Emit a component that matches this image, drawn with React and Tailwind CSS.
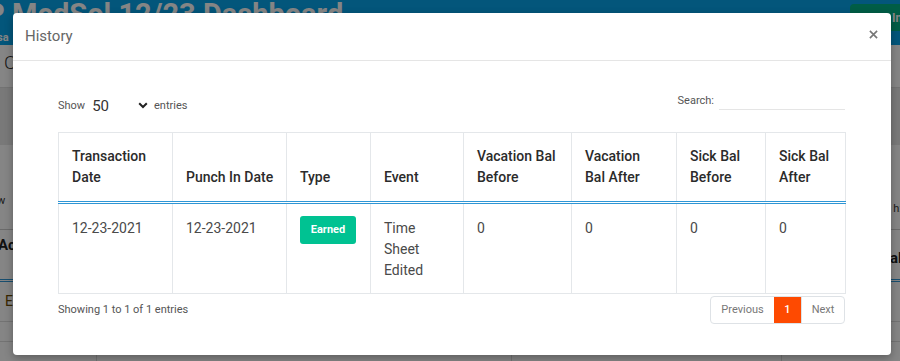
import React from "react";

const cols = [114, 114, 84, 93, 108, 105, 89, 80];
const heads = [
  ["Transaction", "Date"],
  ["Punch In Date"],
  ["Type"],
  ["Event"],
  ["Vacation Bal", "Before"],
  ["Vacation", "Bal After"],
  ["Sick Bal", "Before"],
  ["Sick Bal", "After"],
];

const td = "border border-[#e4e7ea] px-[13px] pt-[14px] pb-[12px] align-top text-[14px] leading-[21px] text-[#4a4a4a]";

export default function App() {
  return (
    <div
      className="relative w-[900px] h-[361px] overflow-hidden bg-white"
      style={{ fontFamily: "Roboto, 'Noto Sans', sans-serif" }}
    >
      {/* background page */}
      <div className="flex flex-col w-[900px]">
        <div className="h-[45px] bg-[#06a5ec] flex items-start overflow-hidden">
          <div className="flex-1 flex flex-col">
            <div className="ml-[-14px] mt-[-3px] text-[29px] leading-[34px] font-bold text-white whitespace-nowrap">
              P MedSol 12/23 Dashboard
            </div>
            <div className="ml-[-3px] mt-[1px] text-[11px] font-bold text-white leading-[12px]">sa</div>
          </div>
          <div className="mt-[4px] mr-[-40px] w-[90px] h-[27px] rounded-[4px] bg-[#00b386] text-white text-[12px] font-bold flex items-center pl-[42px] whitespace-nowrap">
            In
          </div>
        </div>
        <div className="h-[43px] bg-white border-b border-[#dddddd] flex items-center text-[19px] font-light text-[#333]">
          <span className="ml-[4px] mt-[-6px]">C</span>
        </div>
        <div className="h-[57px] bg-[#e8e8e8]" />
        <div className="h-[84px] bg-white flex items-end justify-between pb-[20px] text-[11px] text-[#333]">
          <span className="ml-[-3px]">w</span>
          <span className="mr-[-2px] mb-[-8px]">h:</span>
        </div>
        <div className="h-[53px] bg-white border-t border-[#cccccc] border-b-[3px] border-double border-b-[#2f96d5] flex justify-between items-center text-[15px] font-bold text-[#222]">
          <span className="ml-[-2px] mt-[-18px]">Ac</span>
          <span className="mr-[-2px] mt-[8px]">al</span>
        </div>
        <div className="h-[40px] bg-white border-b border-[#dddddd] flex items-center">
          <span className="ml-[5px] text-[14px] text-[#6b4a00]">E</span>
        </div>
        <div className="h-[20px] bg-white border-b border-[#dddddd]" />
        <div className="h-[40px] bg-white flex">
          <div className="w-[97px] border-r border-[#dddddd]" />
          <div className="w-[415px] border-r border-[#dddddd]" />
          <div className="w-[270px] border-r border-[#dddddd]" />
        </div>
      </div>

      {/* backdrop */}
      <div className="absolute inset-0 bg-black/[0.48]" />

      {/* modal */}
      <div className="absolute left-[13px] top-[13px] w-[878px] h-[342px] bg-white rounded-[4px] shadow-[0_3px_9px_rgba(0,0,0,0.3)] flex flex-col">
        <div className="h-[48px] border-b border-[#e5e5e5] flex items-center justify-between pl-[12px] pr-[12px]">
          <span className="text-[15px] text-[#666] leading-none mt-[-1px]">History</span>
          <svg width="9" height="9" viewBox="0 0 10 10" className="mt-[-4px] mr-[1px]">
            <path d="M1 1L9 9M9 1L1 9" stroke="#777" strokeWidth="1.8" />
          </svg>
        </div>
        <div className="pl-[45px] pr-[46px] pt-[33px] flex flex-col">
          <div className="flex justify-between items-start h-[24px]">
            <div className="h-[24px] flex items-center text-[11px] text-[#555]">
              <span>Show</span>
              <span className="ml-[7px] text-[15px] text-[#333]">50</span>
              <svg width="10" height="7" viewBox="0 0 10 7" className="ml-[29px] mt-[-2px]">
                <path d="M1.2 1.2L5 5L8.8 1.2" stroke="#222" strokeWidth="2" fill="none" />
              </svg>
              <span className="ml-[6px]">entries</span>
            </div>
            <div className="flex items-start">
              <span className="text-[11px] text-[#555] leading-[13px]">Search:</span>
              <div className="ml-[5px] w-[126px] h-[16px] border-b border-[#e5e5e5]" />
            </div>
          </div>

          <table className="mt-[14px] w-[787px] table-fixed border-collapse border border-[#e4e7ea]">
            <colgroup>
              {cols.map((w, i) => (
                <col key={i} style={{ width: w }} />
              ))}
            </colgroup>
            <thead>
              <tr className="border-b-[3px] border-double border-[#2f96d5]">
                {heads.map((h, i) => (
                  <th
                    key={i}
                    className="border-x border-[#e4e7ea] px-[13px] py-[13px] text-left align-bottom text-[14px] leading-[21px] font-medium text-[#2b2b2b] whitespace-nowrap"
                  >
                    {h.map((l, j) => (
                      <div key={j}>{l}</div>
                    ))}
                  </th>
                ))}
              </tr>
            </thead>
            <tbody>
              <tr>
                <td className={td}>12-23-2021</td>
                <td className={td}>12-23-2021</td>
                <td className="border border-[#e4e7ea] px-[13px] pt-[12px] pb-[12px] align-top">
                  <span className="inline-flex items-center justify-center w-[56px] h-[28px] rounded-[3px] bg-[#00c292] text-white text-[11px] font-bold">
                    Earned
                  </span>
                </td>
                <td className={td}>
                  <div>Time</div>
                  <div>Sheet</div>
                  <div>Edited</div>
                </td>
                {[0, 1, 2, 3].map((i) => (
                  <td key={i} className={td}>0</td>
                ))}
              </tr>
            </tbody>
          </table>

          <div className="mt-[2px] flex justify-between items-center">
            <span className="text-[11px] text-[#555]">Showing 1 to 1 of 1 entries</span>
            <div className="flex h-[28px] border border-[#dee2e6] rounded-[4px] overflow-hidden text-[11px]">
              <span className="w-[63px] flex items-center justify-center text-[#777]">Previous</span>
              <span className="w-[27px] flex items-center justify-center bg-[#fe4a01] text-white font-medium">1</span>
              <span className="w-[43px] flex items-center justify-center text-[#777] border-l border-[#dee2e6]">Next</span>
            </div>
          </div>
        </div>
      </div>
    </div>
  );
}
